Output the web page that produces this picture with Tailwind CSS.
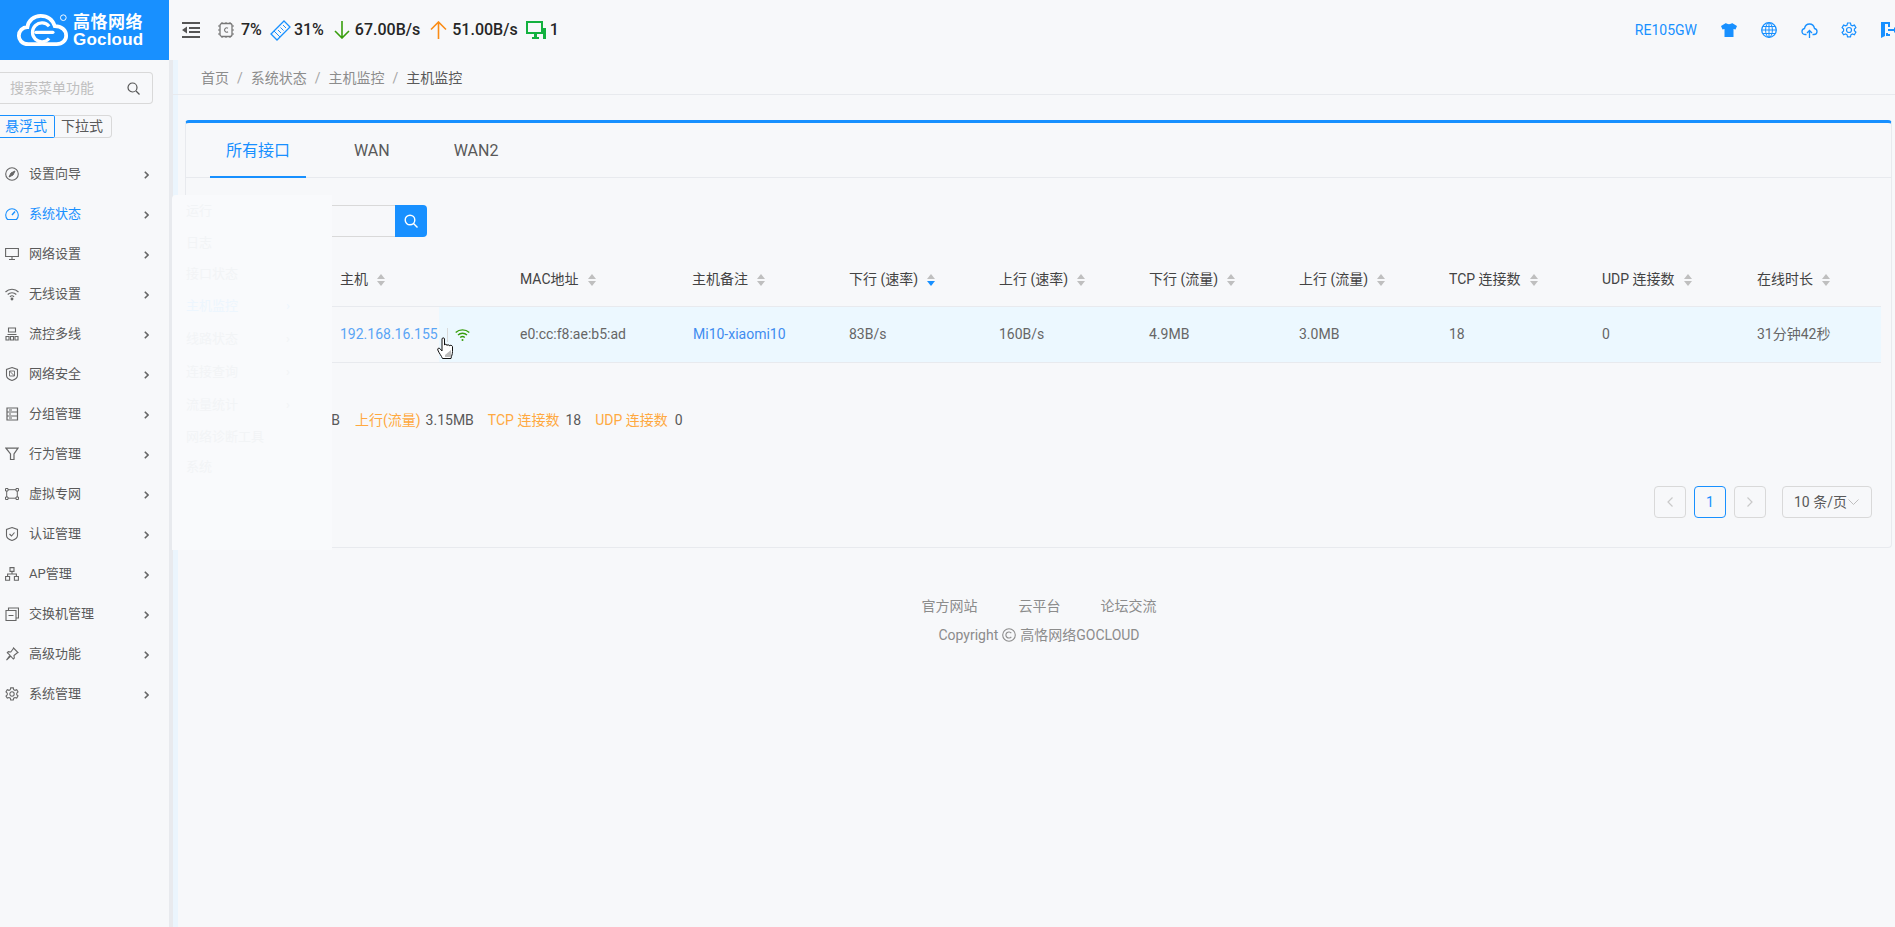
<!DOCTYPE html>
<html lang="zh-CN">
<head>
  <meta charset="UTF-8">
  <meta name="viewport" content="width=device-width, initial-scale=1.0">
  <title>高恪网络 Gocloud</title>
  <script src="https://cdn.jsdelivr.net/npm/@tailwindcss/browser@4"></script>
</head>
<body class="h-[927px] w-[1895px] overflow-hidden bg-[#f7f8fa] text-[14px] text-[#595959] font-[Roboto,'Noto_Sans_CJK_SC',sans-serif]">
  <div class="relative h-full w-full overflow-hidden">

    <!-- top bar -->
    <header class="flex h-[60px] items-center">
      <div class="flex h-[60px] w-[169px] shrink-0 items-center bg-[#1890ff] text-white">
        <svg class="ml-[16px] h-[36px] w-[53px] shrink-0" viewBox="0 0 56 36" fill="none" stroke="#fff">
          <path d="M13 33C6 33 3 28 3 24c0-5 4-9 9-9 1-7 7-12 14-12 8 0 13 5 15 11 7 0 12 4 12 10 0 5-4 9-10 9z" stroke-width="4"/>
          <path d="M35 14a10 10 0 1 0 0 13" stroke-width="3.4"/>
          <path d="M21 20.500h18" stroke-width="3.4" stroke-linecap="round"/>
          <circle cx="50" cy="5" r="3" stroke-width="1"/>
        </svg>
        <div class="ml-[4px] flex flex-col font-bold leading-none">
          <span class="text-[17px] leading-[18px] tracking-[0.5px]">高恪网络</span>
          <span class="text-[17px] leading-[17px] tracking-[0.2px] font-[Liberation_Sans,sans-serif]">Gocloud</span>
        </div>
      </div>

      <svg class="ml-[13px] h-[16px] w-[18px] shrink-0" viewBox="0 0 18 16" fill="#555">
        <path d="M0 0h18v2H0zM7 5h11v2H7zM7 9h11v2H7zM0 14h18v2H0zM5 4.500v7L0 8z"/>
      </svg>

      <div class="ml-[18px] flex items-center text-[16px] font-medium text-[#262626]">
        <svg class="h-[18px] w-[16px]" viewBox="0 0 16 18" fill="none" stroke="#777">
          <rect x="2" y="2.500" width="12" height="13" rx="2" stroke-width="1.300"/>
          <path d="M4 1v2M8 1v2M12 1v2M4 15v2M8 15v2M12 15v2M0 5h2M0 9h2M0 13h2M14 5h2M14 9h2M14 13h2" stroke-width="1"/>
          <path d="M10 7.200a2.200 2.200 0 1 0 0 3.600" stroke-width="1.100"/>
        </svg>
        <span class="ml-[7px]">7%</span>
        <svg class="ml-[8px] h-[21px] w-[21px]" viewBox="0 0 21 21" fill="none" stroke="#1890ff" stroke-width="1.300">
          <path d="M14 1l6 6L7 20l-6-6z"/>
          <path d="M13 5l3 3M10.500 7.500l3 3M8 10l3 3M5.500 12.500l3 3M4 11l6 6" stroke-width="1"/>
        </svg>
        <span class="ml-[3px]">31%</span>
        <svg class="ml-[10px] h-[18px] w-[16px]" viewBox="0 0 16 18" fill="none" stroke="#389e0d" stroke-width="1.600">
          <path d="M8 0v17M1 10l7 7 7-7"/>
        </svg>
        <span class="ml-[5px]">67.00B/s</span>
        <svg class="ml-[10px] h-[18px] w-[17px]" viewBox="0 0 17 18" fill="none" stroke="#fa8c16" stroke-width="1.600">
          <path d="M8.500 18V1M1 8.500L8.500 1 16 8.500"/>
        </svg>
        <span class="ml-[5px]">51.00B/s</span>
        <svg class="ml-[8px] h-[18px] w-[20px]" viewBox="0 0 20 18" fill="none">
          <path d="M1 1h15v11H1z" stroke="#13b13f" stroke-width="2"/>
          <path d="M6 16h7v2H6zM8 12h3v4H8zM17 7h3v11h-3z" fill="#13b13f"/>
        </svg>
        <span class="ml-[4px]">1</span>
      </div>

      <div class="ml-auto mr-[-14px] flex items-center text-[#1890ff]">
        <span class="mr-[12px] text-[14px]">RE105GW</span>
        <div class="flex w-[40px] justify-center">
          <svg class="h-[14px] w-[16px]" viewBox="0 0 16 14" fill="#1890ff"><path d="M5 0L0 3l1.500 3.500L3.500 6v8h9V6l2 .5L16 3l-5-3c-.5 1.500-5.500 1.500-6 0z"/></svg>
        </div>
        <div class="flex w-[40px] justify-center">
          <svg class="h-[16px] w-[16px]" viewBox="0 0 16 16" fill="none" stroke="#1890ff">
            <circle cx="8" cy="8" r="7.300" stroke-width="1.300"/>
            <ellipse cx="8" cy="8" rx="3.400" ry="7.300"/>
            <path d="M8 1v14M1 8h14M2 4.500h12M2 11.500h12"/>
          </svg>
        </div>
        <div class="flex w-[40px] justify-center">
          <svg class="h-[15px] w-[17px]" viewBox="0 0 17 15" fill="none" stroke="#1890ff" stroke-width="1.300">
            <path d="M5.500 11.500H4C2 11.500 1 10 1 8.500 1 7 2 5.800 3.500 5.500 4 3 6 1 8.500 1c2.500 0 4.500 2 5 4.500 1.500.3 2.500 1.500 2.500 3 0 1.500-1 3-3 3h-1.500"/>
            <path d="M8.500 15V7.500M6 10l2.500-2.500L11 10"/>
          </svg>
        </div>
        <div class="flex w-[40px] justify-center">
          <svg class="h-[16px] w-[16px]" viewBox="0 0 16 16" fill="none" stroke="#1890ff" stroke-width="1.200">
            <path d="M6.500 1h3l.4 2 1.500.8 2-.7 1.500 2.600-1.500 1.300v1.800l1.500 1.300-1.500 2.600-2-.7-1.500.8-.4 2h-3l-.4-2-1.500-.8-2 .7L1.100 10.300l1.500-1.300V7.100L1.100 5.700l1.500-2.600 2 .7 1.500-.8z"/>
            <circle cx="8" cy="8" r="2.500"/>
          </svg>
        </div>
        <div class="flex w-[40px] justify-center">
          <svg class="h-[16px] w-[16px]" viewBox="0 0 16 16" fill="#1890ff"><path d="M0 0h9v5H7V2H4v12l-4 2zM5 11h2v1h2v2H5zM7 7h6V5l3 3-3 3V9H7z"/></svg>
        </div>
      </div>
    </header>

    <div class="flex h-[867px]">
      <!-- sidebar -->
      <aside class="w-[169px] shrink-0">
        <div class="mt-[12px] flex h-[32px] w-[153px] items-center justify-between rounded-r-[4px] border border-l-0 border-[#d9d9d9] pl-[10px] pr-[12px] text-[14px] text-[#bfbfbf]">
          <span>搜索菜单功能</span>
          <svg class="h-[13px] w-[13px]" viewBox="0 0 13 13" fill="none" stroke="#555" stroke-width="1.200"><circle cx="5.500" cy="5.500" r="4.500"/><path d="M9 9l3.500 3.500"/></svg>
        </div>
        <div class="mt-[11px] flex h-[23px] text-[14px] leading-[21px]">
          <span class="w-[55px] rounded-r-[2px] border border-l-0 border-[#1890ff] pl-[5px] text-[#1890ff]">悬浮式</span>
          <span class="w-[57px] rounded-r-[4px] border border-l-0 border-[#d9d9d9] pl-[6px] text-[#595959]">下拉式</span>
        </div>

        <nav class="mt-[16px] text-[13px]">
          <div class="flex h-[40px] items-center pl-[5px] pr-[20px]">
            <svg class="h-[14px] w-[14px] shrink-0" viewBox="0 0 14 14" fill="none" stroke="#666"><circle cx="7" cy="7" r="6.300" stroke-width="1.100"/><path d="M10 4L8 8 4 10l2-4z" fill="#666"/></svg>
            <span class="ml-[10px]">设置向导</span>
            <svg class="ml-auto mt-[2px] h-[8px] w-[5px]" viewBox="0 0 5 8" fill="none" stroke="#666" stroke-width="1.600"><path d="M.8.800L4 4 .8 7.200"/></svg>
          </div>
          <div class="flex h-[40px] items-center pl-[5px] pr-[20px] text-[#1890ff]">
            <svg class="h-[14px] w-[14px] shrink-0" viewBox="0 0 14 14" fill="none" stroke="#1890ff" stroke-width="1.100"><path d="M2.500 12.500A6.300 6.300 0 1 1 11.500 12.500z"/><path d="M7 8l3-3.500" stroke-width="1.400"/></svg>
            <span class="ml-[10px]">系统状态</span>
            <svg class="ml-auto mt-[2px] h-[8px] w-[5px]" viewBox="0 0 5 8" fill="none" stroke="#666" stroke-width="1.600"><path d="M.8.800L4 4 .8 7.200"/></svg>
          </div>
          <div class="flex h-[40px] items-center pl-[5px] pr-[20px]">
            <svg class="h-[14px] w-[14px] shrink-0" viewBox="0 0 14 14" fill="none" stroke="#666" stroke-width="1.100"><path d="M.6 1.500h12.800v8H.6zM7 9.500v3M4 12.500h6"/></svg>
            <span class="ml-[10px]">网络设置</span>
            <svg class="ml-auto mt-[2px] h-[8px] w-[5px]" viewBox="0 0 5 8" fill="none" stroke="#666" stroke-width="1.600"><path d="M.8.800L4 4 .8 7.200"/></svg>
          </div>
          <div class="flex h-[40px] items-center pl-[5px] pr-[20px]">
            <svg class="h-[14px] w-[14px] shrink-0" viewBox="0 0 14 14" fill="none" stroke="#666" stroke-width="1.100"><path d="M.5 5a9 9 0 0 1 13 0M2.700 7.500a6 6 0 0 1 8.600 0M4.900 9.800a3 3 0 0 1 4.200 0"/><circle cx="7" cy="12" r=".9" fill="#666"/></svg>
            <span class="ml-[10px]">无线设置</span>
            <svg class="ml-auto mt-[2px] h-[8px] w-[5px]" viewBox="0 0 5 8" fill="none" stroke="#666" stroke-width="1.600"><path d="M.8.800L4 4 .8 7.200"/></svg>
          </div>
          <div class="flex h-[40px] items-center pl-[5px] pr-[20px]">
            <svg class="h-[14px] w-[14px] shrink-0" viewBox="0 0 14 14" fill="none" stroke="#666" stroke-width="1.100"><path d="M3.500 1h7v4h-7zM1 9.500h3v3.500H1zM5.500 9.500h3v3.500h-3zM10 9.500h3v3.500h-3zM2.500 7.500h9"/></svg>
            <span class="ml-[10px]">流控多线</span>
            <svg class="ml-auto mt-[2px] h-[8px] w-[5px]" viewBox="0 0 5 8" fill="none" stroke="#666" stroke-width="1.600"><path d="M.8.800L4 4 .8 7.200"/></svg>
          </div>
          <div class="flex h-[40px] items-center pl-[5px] pr-[20px]">
            <svg class="h-[14px] w-[14px] shrink-0" viewBox="0 0 14 14" fill="none" stroke="#666" stroke-width="1.100"><path d="M7 .6l5.500 1.800v6c0 2.500-3 4.200-5.500 5-2.500-.8-5.500-2.500-5.500-5v-6z"/><path d="M4.500 4h5v5h-5zM4.500 4l5 5" stroke-width=".9"/></svg>
            <span class="ml-[10px]">网络安全</span>
            <svg class="ml-auto mt-[2px] h-[8px] w-[5px]" viewBox="0 0 5 8" fill="none" stroke="#666" stroke-width="1.600"><path d="M.8.800L4 4 .8 7.200"/></svg>
          </div>
          <div class="flex h-[40px] items-center pl-[5px] pr-[20px]">
            <svg class="h-[14px] w-[14px] shrink-0" viewBox="0 0 14 14" fill="none" stroke="#666" stroke-width="1.200"><path d="M2 1h10.500v12H2zM2 5h10.500M2 9h10.500M4 3h3M4 7h2M4 11h3"/></svg>
            <span class="ml-[10px]">分组管理</span>
            <svg class="ml-auto mt-[2px] h-[8px] w-[5px]" viewBox="0 0 5 8" fill="none" stroke="#666" stroke-width="1.600"><path d="M.8.800L4 4 .8 7.200"/></svg>
          </div>
          <div class="flex h-[40px] items-center pl-[5px] pr-[20px]">
            <svg class="h-[14px] w-[14px] shrink-0" viewBox="0 0 14 14" fill="none" stroke="#666" stroke-width="1.200"><path d="M1 1.200h12L9 7v5.500H5.500V7z"/></svg>
            <span class="ml-[10px]">行为管理</span>
            <svg class="ml-auto mt-[2px] h-[8px] w-[5px]" viewBox="0 0 5 8" fill="none" stroke="#666" stroke-width="1.600"><path d="M.8.800L4 4 .8 7.200"/></svg>
          </div>
          <div class="flex h-[40px] items-center pl-[5px] pr-[20px]">
            <svg class="h-[14px] w-[14px] shrink-0" viewBox="0 0 14 14" fill="none" stroke="#666" stroke-width="1"><path d="M.5 1.500h2.500v2.500H.5zM11 1.500h2.500v2.500H11zM.5 10h2.500v2.500H.5zM11 10h2.500v2.500H11zM3 2.700h8M3 11.200h8M1.700 4v6M12.300 4v6"/></svg>
            <span class="ml-[10px]">虚拟专网</span>
            <svg class="ml-auto mt-[2px] h-[8px] w-[5px]" viewBox="0 0 5 8" fill="none" stroke="#666" stroke-width="1.600"><path d="M.8.800L4 4 .8 7.200"/></svg>
          </div>
          <div class="flex h-[40px] items-center pl-[5px] pr-[20px]">
            <svg class="h-[14px] w-[14px] shrink-0" viewBox="0 0 14 14" fill="none" stroke="#666" stroke-width="1.100"><path d="M7 .6l5.500 1.800v6c0 2.500-3 4.200-5.500 5-2.500-.8-5.500-2.500-5.500-5v-6z"/><path d="M4.500 7l2 2 3-3.500"/></svg>
            <span class="ml-[10px]">认证管理</span>
            <svg class="ml-auto mt-[2px] h-[8px] w-[5px]" viewBox="0 0 5 8" fill="none" stroke="#666" stroke-width="1.600"><path d="M.8.800L4 4 .8 7.200"/></svg>
          </div>
          <div class="flex h-[40px] items-center pl-[5px] pr-[20px]">
            <svg class="h-[14px] w-[14px] shrink-0" viewBox="0 0 14 14" fill="none" stroke="#666" stroke-width="1.100"><path d="M5 .6h4v3.800H5zM.6 9.500h4v3.800h-4zM9.400 9.500h4v3.800h-4zM7 4.400v2.600M2.600 9.500V7h8.800v2.500"/></svg>
            <span class="ml-[10px]">AP管理</span>
            <svg class="ml-auto mt-[2px] h-[8px] w-[5px]" viewBox="0 0 5 8" fill="none" stroke="#666" stroke-width="1.600"><path d="M.8.800L4 4 .8 7.200"/></svg>
          </div>
          <div class="flex h-[40px] items-center pl-[5px] pr-[20px]">
            <svg class="h-[14px] w-[14px] shrink-0" viewBox="0 0 14 14" fill="none" stroke="#666" stroke-width="1.100"><path d="M1 3.500h10v10H1zM3.500 3.500V1h10v10H11M3.500 8.500h5"/></svg>
            <span class="ml-[10px]">交换机管理</span>
            <svg class="ml-auto mt-[2px] h-[8px] w-[5px]" viewBox="0 0 5 8" fill="none" stroke="#666" stroke-width="1.600"><path d="M.8.800L4 4 .8 7.200"/></svg>
          </div>
          <div class="flex h-[40px] items-center pl-[5px] pr-[20px]">
            <svg class="h-[14px] w-[14px] shrink-0" viewBox="0 0 14 14" fill="none" stroke="#666" stroke-width="1.100"><path d="M8.500 1L13 5.500l-1 .5-3 2.500.3 2.500-1 1-2.500-2.800L1.500 13 5 8.200 2.300 5.700l1-1 2.500.3L8 2z"/></svg>
            <span class="ml-[10px]">高级功能</span>
            <svg class="ml-auto mt-[2px] h-[8px] w-[5px]" viewBox="0 0 5 8" fill="none" stroke="#666" stroke-width="1.600"><path d="M.8.800L4 4 .8 7.200"/></svg>
          </div>
          <div class="flex h-[40px] items-center pl-[5px] pr-[20px]">
            <svg class="h-[14px] w-[14px] shrink-0" viewBox="0 0 16 16" fill="none" stroke="#666" stroke-width="1.200"><path d="M6.500 1h3l.4 2 1.500.8 2-.7 1.500 2.600-1.500 1.300v1.800l1.500 1.300-1.500 2.600-2-.7-1.500.8-.4 2h-3l-.4-2-1.500-.8-2 .7L1.100 10.300l1.500-1.300V7.100L1.100 5.700l1.500-2.600 2 .7 1.500-.8z"/><circle cx="8" cy="8" r="2.500"/></svg>
            <span class="ml-[10px]">系统管理</span>
            <svg class="ml-auto mt-[2px] h-[8px] w-[5px]" viewBox="0 0 5 8" fill="none" stroke="#666" stroke-width="1.600"><path d="M.8.800L4 4 .8 7.200"/></svg>
          </div>
        </nav>
      </aside>

      <div class="h-full w-[4px] shrink-0 bg-[#e8eaee]"></div>
      <div class="h-full w-[5px] shrink-0 bg-[#ebf5fd]"></div>

      <!-- content -->
      <main class="min-w-0 flex-1">
        <div class="ml-[-9px] flex h-[35px] items-center border-b border-[#e8eaee] pl-[32px] pt-[2px] text-[#8c8c8c]">
          <span>首页</span><span class="mx-[8px] text-[#a6a6a6]">/</span>
          <span>系统状态</span><span class="mx-[8px] text-[#a6a6a6]">/</span>
          <span>主机监控</span><span class="mx-[8px] text-[#a6a6a6]">/</span>
          <span class="text-[#595959]">主机监控</span>
        </div>

        <section class="ml-[7px] mr-[3px] mt-[25px] h-[428px] rounded-[4px] border border-t-[3px] border-[#e8eaee] border-t-[#1890ff]">
          <div class="flex h-[55px] border-b border-[#e8eaee] pl-[24px] pt-[2px] text-[16px] text-[#595959]">
            <div class="relative flex w-[96px] items-center justify-center text-[#1890ff]">
              所有接口
              <div class="absolute bottom-[-1px] left-0 h-[2px] w-full bg-[#1890ff]"></div>
            </div>
            <div class="ml-[32px] flex items-center px-[16px]">WAN</div>
            <div class="ml-[32px] flex items-center px-[16px]">WAN2</div>
          </div>

          <div class="ml-[110px] mt-[27px] flex h-[32px]">
            <div class="w-[99px] border-y border-[#d9d9d9]"></div>
            <div class="flex w-[32px] items-center justify-center rounded-r-[4px] bg-[#1890ff]">
              <svg class="h-[14px] w-[14px]" viewBox="0 0 14 14" fill="none" stroke="#fff" stroke-width="1.400"><circle cx="6" cy="6" r="4.800"/><path d="M9.500 9.500l4 4"/></svg>
            </div>
          </div>

          <!-- table: first column sits under the open flyout -->
          <div class="ml-[11px] mt-[14px] w-[1684px]">
            <div class="grid h-[56px] grid-cols-[135px_180px_172px_157px_150px_150px_150px_150px_153px_155px_132px] items-center border-b border-[#e8eaee] pt-[2px] text-[#434343]">
              <div></div>
              <div class="flex items-center pl-[8px]">主机<svg class="ml-[9px] h-[12px] w-[8px]" viewBox="0 0 8 12" fill="#bfbfbf"><path d="M4 0l4 5H0zM0 7h8l-4 5z"/></svg></div>
              <div class="flex items-center pl-[8px]">MAC地址<svg class="ml-[9px] h-[12px] w-[8px]" viewBox="0 0 8 12" fill="#bfbfbf"><path d="M4 0l4 5H0zM0 7h8l-4 5z"/></svg></div>
              <div class="flex items-center pl-[8px]">主机备注<svg class="ml-[9px] h-[12px] w-[8px]" viewBox="0 0 8 12" fill="#bfbfbf"><path d="M4 0l4 5H0zM0 7h8l-4 5z"/></svg></div>
              <div class="flex items-center pl-[8px]">下行 (速率)<svg class="ml-[9px] h-[12px] w-[8px]" viewBox="0 0 8 12" fill="#bfbfbf"><path d="M4 0l4 5H0z"/><path d="M0 7h8l-4 5z" fill="#1890ff"/></svg></div>
              <div class="flex items-center pl-[8px]">上行 (速率)<svg class="ml-[9px] h-[12px] w-[8px]" viewBox="0 0 8 12" fill="#bfbfbf"><path d="M4 0l4 5H0zM0 7h8l-4 5z"/></svg></div>
              <div class="flex items-center pl-[8px]">下行 (流量)<svg class="ml-[9px] h-[12px] w-[8px]" viewBox="0 0 8 12" fill="#bfbfbf"><path d="M4 0l4 5H0zM0 7h8l-4 5z"/></svg></div>
              <div class="flex items-center pl-[8px]">上行 (流量)<svg class="ml-[9px] h-[12px] w-[8px]" viewBox="0 0 8 12" fill="#bfbfbf"><path d="M4 0l4 5H0zM0 7h8l-4 5z"/></svg></div>
              <div class="flex items-center pl-[8px]">TCP 连接数<svg class="ml-[9px] h-[12px] w-[8px]" viewBox="0 0 8 12" fill="#bfbfbf"><path d="M4 0l4 5H0zM0 7h8l-4 5z"/></svg></div>
              <div class="flex items-center pl-[8px]">UDP 连接数<svg class="ml-[9px] h-[12px] w-[8px]" viewBox="0 0 8 12" fill="#bfbfbf"><path d="M4 0l4 5H0zM0 7h8l-4 5z"/></svg></div>
              <div class="flex items-center pl-[8px]">在线时长<svg class="ml-[9px] h-[12px] w-[8px]" viewBox="0 0 8 12" fill="#bfbfbf"><path d="M4 0l4 5H0zM0 7h8l-4 5z"/></svg></div>
            </div>
            <div class="grid h-[56px] grid-cols-[135px_180px_172px_157px_150px_150px_150px_150px_153px_155px_132px] items-stretch border-b border-[#e8eaee] text-[#666]">
              <div></div>
              <div class="flex items-stretch">
                <div class="flex w-[107px] items-center pl-[8px] text-[#5aa5f5]">192.168.16.155</div>
                <div class="flex flex-1 items-center bg-[#ecf8ff] pl-[8px]">
                  <div class="h-[14px] w-px bg-[#d9d9d9]"></div>
                  <svg class="ml-[7px] h-[14px] w-[15px]" viewBox="0 0 15 14" fill="none" stroke="#389e0d" stroke-width="1.400"><path d="M.7 4.500a10 10 0 0 1 13.600 0M3 7a6.700 6.700 0 0 1 9 0M5.200 9.500a3.400 3.400 0 0 1 4.600 0"/><circle cx="7.500" cy="12" r="1" fill="#389e0d" stroke="none"/></svg>
                </div>
              </div>
              <div class="flex items-center bg-[#ecf8ff] pl-[8px]">e0:cc:f8:ae:b5:ad</div>
              <div class="flex items-center bg-[#ecf8ff] pl-[9px] text-[#3f8cf0]">Mi10-xiaomi10</div>
              <div class="flex items-center bg-[#ecf8ff] pl-[8px]">83B/s</div>
              <div class="flex items-center bg-[#ecf8ff] pl-[8px]">160B/s</div>
              <div class="flex items-center bg-[#ecf8ff] pl-[8px]">4.9MB</div>
              <div class="flex items-center bg-[#ecf8ff] pl-[8px]">3.0MB</div>
              <div class="flex items-center bg-[#ecf8ff] pl-[8px]">18</div>
              <div class="flex items-center bg-[#ecf8ff] pl-[8px]">0</div>
              <div class="flex items-center bg-[#ecf8ff] pl-[8px]">31分钟42秒</div>
            </div>
          </div>

          <div class="ml-[33px] mt-[47px] flex h-[20px] items-center whitespace-nowrap text-[#595959]">
            <span class="text-[#ffa940]">下行(流量)</span><span class="ml-[7px]">4.93MB</span>
            <span class="ml-[15px] text-[#ffa940]">上行(流量)</span><span class="ml-[5px]">3.15MB</span>
            <span class="ml-[14px] text-[#ffa940]">TCP 连接数</span><span class="ml-[6px]">18</span>
            <span class="ml-[14px] text-[#ffa940]">UDP 连接数</span><span class="ml-[7px]">0</span>
          </div>

          <div class="mr-[19px] mt-[56px] flex h-[32px] items-center justify-end">
            <div class="flex h-[32px] w-[32px] items-center justify-center rounded-[4px] border border-[#d9d9d9]">
              <svg class="h-[10px] w-[6px]" viewBox="0 0 6 10" fill="none" stroke="#c9c9c9" stroke-width="1.200"><path d="M5.500.5L1 5l4.500 4.500"/></svg>
            </div>
            <div class="ml-[8px] flex h-[32px] w-[32px] items-center justify-center rounded-[4px] border border-[#1890ff] text-[#1890ff]">1</div>
            <div class="ml-[8px] flex h-[32px] w-[32px] items-center justify-center rounded-[4px] border border-[#d9d9d9]">
              <svg class="h-[10px] w-[6px]" viewBox="0 0 6 10" fill="none" stroke="#c9c9c9" stroke-width="1.200"><path d="M.5.5L5 5 .5 9.500"/></svg>
            </div>
            <div class="ml-[16px] flex h-[32px] w-[90px] items-center rounded-[4px] border border-[#d9d9d9] pl-[11px]">
              <span>10 条/页</span>
              <svg class="ml-px h-[6px] w-[11px]" viewBox="0 0 11 6" fill="none" stroke="#bfbfbf"><path d="M.5.5l5 5 5-5"/></svg>
            </div>
          </div>
        </section>

        <footer class="ml-[5px] mt-[47px] flex flex-col items-center text-[#8c8c8c]">
          <div class="flex h-[22px] items-center">
            <span>官方网站</span><span class="ml-[41px]">云平台</span><span class="ml-[40px]">论坛交流</span>
          </div>
          <div class="mt-[7px] flex h-[22px] items-center">
            Copyright
            <svg class="mx-[4px] h-[14px] w-[14px]" viewBox="0 0 14 14" fill="none" stroke="#8c8c8c" stroke-width="1.100"><circle cx="7" cy="7" r="6.300"/><path d="M9.300 5.200a3 3 0 1 0 0 3.600"/></svg>
            高恪网络GOCLOUD
          </div>
        </footer>
      </main>
    </div>

    <!-- flyout of 系统状态, caught while fading in -->
    <div class="absolute left-[172px] top-[195px] h-[355px] w-[160px] rounded-tl-[4px] bg-[#f9fafc] pl-[14px] text-[13px] text-[#f2f4f6]">
      <div class="flex h-[32px] items-center">运行</div>
      <div class="flex h-[31px] items-center">日志</div>
      <div class="flex h-[32px] items-center">接口状态</div>
      <div class="flex h-[32px] items-center pr-[42px] text-[#edf6fe]">主机监控<span class="ml-auto">›</span></div>
      <div class="flex h-[33px] items-center pr-[42px]">线路状态<span class="ml-auto">›</span></div>
      <div class="flex h-[33px] items-center pr-[42px]">连接查询<span class="ml-auto">›</span></div>
      <div class="flex h-[33px] items-center pr-[42px]">流量统计<span class="ml-auto">›</span></div>
      <div class="flex h-[32px] items-center">网络诊断工具</div>
      <div class="flex h-[28px] items-center">系统</div>
    </div>

    <!-- mouse pointer -->
    <svg class="absolute left-[437px] top-[337px] h-[23px] w-[18px]" viewBox="0 0 18 23" fill="#fff" stroke="#111" stroke-width="1">
      <path d="M5 2c0-1.500 2.500-1.500 2.500 0v6c0-1 2.500-1 2.500 .5 0-1 2.500-1 2.500 .5 0-1 2.500-1 3 .5v5c0 3-1 4-1.500 7H5.500C4.500 19 2 16 .8 13c-.5-1.500 1-2.500 2-1.500L5 14z"/>
      <path d="M8 18l6-5v7H8z" fill="#bbb" stroke="none"/>
    </svg>
  </div>
</body>
</html>
